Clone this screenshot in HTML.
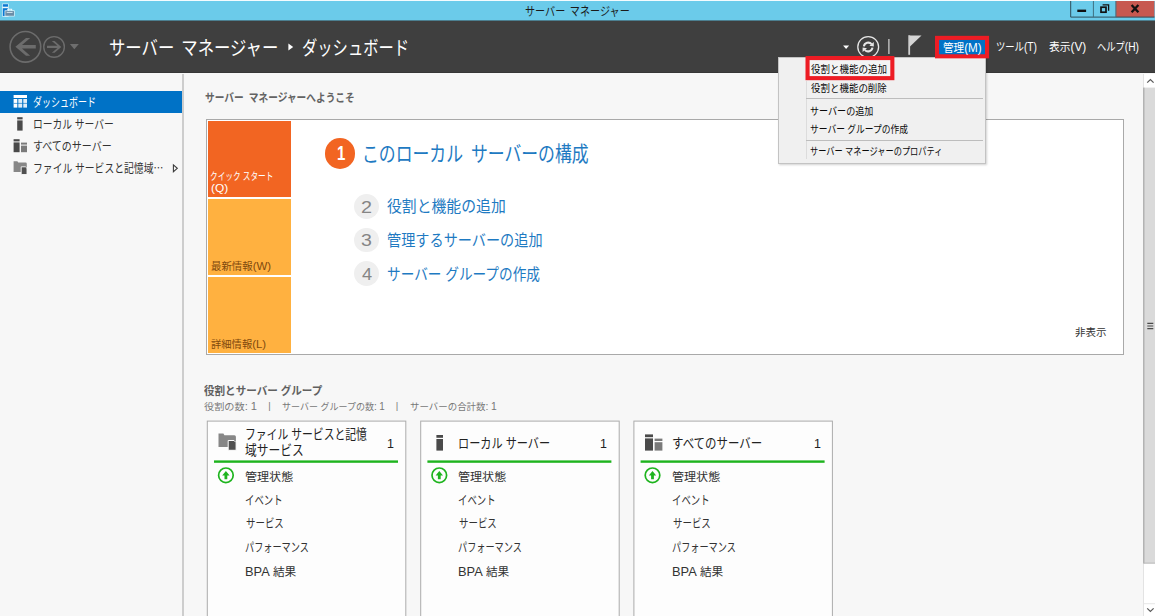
<!DOCTYPE html>
<html lang="ja"><head><meta charset="utf-8"><title>サーバー マネージャー</title>
<style>
html,body{margin:0;padding:0}
body{width:1155px;height:616px;overflow:hidden;position:relative;background:#f7f7f7;font-family:"Liberation Sans", "Noto Sans CJK JP", sans-serif;}
.abs{position:absolute}
.l{font-size:1.1em}
.t{position:absolute;white-space:pre;transform-origin:0 50%;line-height:1;display:block}
#titlebar{position:absolute;left:0;top:0;width:1155px;height:20px;background:#6bcbea;border-top:1px solid #f4fbfe;box-sizing:border-box}
#header{position:absolute;left:0;top:20px;width:1155px;height:53px;background:#3f3f3f;border-top:1px solid #4c7f90;border-bottom:1px solid #373737;box-sizing:border-box}
#sidebar{position:absolute;left:0;top:74px;width:182px;height:542px;background:#f7f7f7;border-right:2px solid #cdcdcd}
#main{position:absolute;left:184px;top:73px;width:959px;height:543px;background:#f7f7f7}
#sel{position:absolute;left:0;top:91px;width:182px;height:21.5px;background:#0072c6}
#welcome{position:absolute;left:206px;top:119px;width:918px;height:236px;background:#fff;border:1px solid #a9a9a9;box-sizing:border-box}
.qt{position:absolute;left:208px;width:82.5px}
.tile{position:absolute;top:421px;width:199px;height:200px;background:#fdfdfd}
.gl{position:absolute;top:460.3px;width:184px;height:2px;background:#1eb41e}
#menu{position:absolute;left:778px;top:57px;width:208px;height:106.5px;background:#f0f0f0;border:1px solid #c3c3c3;box-sizing:border-box;box-shadow:1px 1px 2px rgba(0,0,0,.18)}
.sep{position:absolute;left:806px;width:177px;height:1px;background:#bdbdbd}
.num{position:absolute;border-radius:50%;text-align:center}
#scroll{position:absolute;left:1142.5px;top:74px;width:12.5px;height:542px;background:#fff;border-left:1px solid #e3e3e3;box-sizing:border-box}
</style></head><body>
<div id="sidebar"></div><div id="main"></div>
<div id="sel"></div>
<div id="welcome"></div>
<div class="qt" style="top:121px;height:76.3px;background:#f26522"></div>
<div class="qt" style="top:199px;height:76.3px;background:#ffb140"></div>
<div class="qt" style="top:277px;height:76px;background:#ffb140"></div>
<div class="abs" style="left:208px;top:197.3px;width:82.5px;height:1.7px;background:#fff"></div>
<div class="abs" style="left:208px;top:275.3px;width:82.5px;height:1.7px;background:#fff"></div>
<div class="num" style="left:324.8px;top:138.2px;width:30.4px;height:30.4px;background:#f26522"></div>
<div class="num" style="left:354px;top:193.9px;width:24.8px;height:24.8px;background:#efefef"></div>
<div class="num" style="left:354px;top:227.6px;width:24.8px;height:24.8px;background:#efefef"></div>
<div class="num" style="left:354px;top:261.4px;width:24.8px;height:24.8px;background:#efefef"></div>
<div class="tile" style="left:206.8px"></div>
<div class="tile" style="left:420.3px"></div>
<div class="tile" style="left:633.8px"></div>
<div id="scroll"></div>
<div id="titlebar"></div><div id="header"></div>
<svg class="abs" style="left:0;top:0" width="1155" height="616" viewBox="0 0 1155 616">
<!-- title icon -->
<g id="ti"><rect x="2.2" y="3.6" width="6.4" height="13" fill="#eef8fc"/><rect x="2.8" y="4.2" width="5.2" height="2.5" fill="#0a78d2"/><rect x="2.8" y="8.2" width="5.2" height="7.8" fill="#0a78d2"/>
<path d="M7.8 10.6V9.2H11.6V10.6" fill="none" stroke="#eef8fc" stroke-width="1.1"/><rect x="4.6" y="10.4" width="10" height="6" fill="#eef8fc"/><rect x="5.3" y="11.1" width="8.7" height="4.7" fill="#6b8ea8"/><path d="M6.4 12.3H12.9L12.3 13.1H7z" fill="#eef8fc"/></g>
<!-- window buttons -->
<g id="wb"><rect x="1070.5" y="1" width="22.7" height="16.2" fill="#6bcbea"/><rect x="1093.2" y="1" width="22.6" height="16.2" fill="#6bcbea"/><rect x="1115.8" y="1" width="38.6" height="16.2" fill="#c75850"/>
<path d="M1070.7 1V17.1H1154.5" fill="none" stroke="#2f4f5c" stroke-width="1"/><path d="M1093.4 1V17.1M1115.9 1V17.1" fill="none" stroke="#3f6f80" stroke-width="1"/>
<rect x="1077.3" y="9.6" width="8.8" height="2.4" fill="#111"/>
<rect x="1101" y="7.2" width="5" height="5" fill="none" stroke="#111" stroke-width="1.7"/><path d="M1102.6 4.8H1108.6V10.8" fill="none" stroke="#111" stroke-width="1.3"/>
<path d="M1131.6 5L1138.4 12.2M1138.4 5L1131.6 12.2" stroke="#111" stroke-width="2.3"/>
</g>
<!-- back / forward -->
<circle cx="25.4" cy="46.8" r="15.3" fill="none" stroke="#6c6c6c" stroke-width="1.6"/>
<path d="M15.4 46.8L26 37.9H30.2L22 45H35.8V48.6H22L30.2 55.7H26z" fill="#6c6c6c"/>
<circle cx="54.05" cy="46.9" r="10.3" fill="none" stroke="#6c6c6c" stroke-width="1.4"/>
<path d="M61.3 46.9L54.6 41H51.8L57.4 45.8H47V48H57.4L51.8 52.8H54.6z" fill="#6c6c6c"/>
<path d="M69.9 43.9H78.8L74.35 49.3z" fill="#6e6e6e"/>
<path d="M288.4 43.6L293.2 47L288.4 50.4z" fill="#fff"/>
<!-- header right -->
<path d="M843.1 45.6H849.1L846.1 49.1z" fill="#fff"/>
<circle cx="868.2" cy="47" r="10.4" fill="none" stroke="#e6e6e6" stroke-width="1.3"/>
<path d="M863.9 46.4A4.4 4.4 0 0 1 871.6 44.2M872.5 47.6A4.4 4.4 0 0 1 864.8 49.8" fill="none" stroke="#e6e6e6" stroke-width="2"/>
<path d="M869.4 45.8L873.8 42L873.8 46.4z M867 48.2L862.6 52L862.6 47.6z" fill="#e6e6e6"/>
<rect x="888.3" y="39" width="1.2" height="15" fill="#d8d8d8"/>
<rect x="908.3" y="35.2" width="1.8" height="19.6" fill="#cfcfcf"/><path d="M910 35.4H921.5L910 46.6z" fill="#d6d6d6"/>
<!-- sidebar icons -->
<g fill="#fff"><rect x="13.6" y="95" width="13.4" height="3"/><rect x="13.6" y="99" width="3.7" height="8.6"/><rect x="18.3" y="99" width="3.9" height="8.6" opacity=".88"/><rect x="23.3" y="99" width="3.7" height="8.6" opacity=".88"/><rect x="13.6" y="102.9" width="13.4" height=".9" fill="#0072c6" opacity=".7"/></g>
<g fill="#4a4a4a"><rect x="17.2" y="117.2" width="5.4" height="2.2"/><rect x="17.2" y="120.4" width="5.4" height="10.2"/></g>
<g fill="#4a4a4a"><rect x="13.6" y="139.2" width="6" height="2.2"/><rect x="13.6" y="142.4" width="6" height="9.8"/><rect x="21" y="142.6" width="6" height="2" fill="#7a7a7a"/><rect x="21" y="145.6" width="6" height="6.6" fill="#7a7a7a"/></g>
<g><path d="M13.6 161.3H17.4L18.2 162.6H25.6Q26.8 162.6 26.8 163.8V171.9H13.6z" fill="#878787"/><path d="M21.2 166.8H25.4L27 168.4V174.5H21.2z" fill="#505050" stroke="#f7f7f7" stroke-width=".9"/></g>
<path d="M173.4 164.9L177.3 168.3L173.4 171.7z" fill="none" stroke="#3c3c3c" stroke-width="1.1"/>
<!-- scrollbar -->
<rect x="1143.5" y="87.6" width="11.5" height="475.8" fill="#dadada"/><rect x="1143.2" y="87.6" width="1.2" height="475.8" fill="#a8a8a8"/><rect x="1143.5" y="562.6" width="11.5" height="1" fill="#b8b8b8"/>
<path d="M1147.2 82.6L1150.4 79.6L1153.6 82.6" fill="none" stroke="#5a5a5a" stroke-width="1.3"/>
<path d="M1147.2 608.4L1150.4 611.4L1153.6 608.4" fill="none" stroke="#5a5a5a" stroke-width="1.3"/>
<rect x="1143.5" y="603.2" width="11.5" height="1" fill="#e6e6e6"/>
<path d="M1147.3 323.4H1153.3M1147.3 326H1153.3M1147.3 328.6H1153.3" stroke="#4a4a4a" stroke-width="1.1"/>
<!-- tile icons -->
<g id="tic0"><path d="M218.5 433.6H223.4L224.4 435.2H234.4Q235.9 435.2 235.9 436.8V446.9H218.5z" fill="#878787"/><path d="M228.2 440.5H234L236.1 442.6V450.3H228.2z" fill="#505050" stroke="#fdfdfd" stroke-width="1"/></g>
<g id="tic1" fill="#4a4a4a"><rect x="436.4" y="435" width="6.6" height="2.8"/><rect x="436.4" y="439" width="6.6" height="11.6"/></g>
<g id="tic2"><rect x="645" y="434.4" width="8" height="2.8" fill="#4a4a4a"/><rect x="645" y="438.4" width="8" height="12.2" fill="#4a4a4a"/><rect x="654.6" y="438.6" width="7.8" height="2.4" fill="#7a7a7a"/><rect x="654.6" y="442.2" width="7.8" height="8.4" fill="#7a7a7a"/></g>
<!-- green status -->
<rect x="207.3" y="421.1" width="198.5" height="205" fill="none" stroke="#ababab" stroke-width="1"/>
<rect x="214.0" y="460.4" width="184" height="2.4" fill="#1eb41e"/>
<circle cx="225.9" cy="475.3" r="7.3" fill="none" stroke="#1eb41e" stroke-width="1.7"/><path d="M225.9 470.9L229.6 475.4H227.3V479.2H224.5V475.4H222.2z" fill="#1eb41e"/>
<rect x="420.7" y="421.1" width="198.5" height="205" fill="none" stroke="#ababab" stroke-width="1"/>
<rect x="427.4" y="460.4" width="184" height="2.4" fill="#1eb41e"/>
<circle cx="439.3" cy="475.3" r="7.3" fill="none" stroke="#1eb41e" stroke-width="1.7"/><path d="M439.3 470.9L443.0 475.4H440.7V479.2H437.9V475.4H435.6z" fill="#1eb41e"/>
<rect x="633.9" y="421.1" width="198.5" height="205" fill="none" stroke="#ababab" stroke-width="1"/>
<rect x="640.6" y="460.4" width="184" height="2.4" fill="#1eb41e"/>
<circle cx="652.5" cy="475.3" r="7.3" fill="none" stroke="#1eb41e" stroke-width="1.7"/><path d="M652.5 470.9L656.2 475.4H653.9V479.2H651.1V475.4H648.8z" fill="#1eb41e"/>
</svg>

<div id="menu"></div>
<div class="abs" style="left:806px;top:81px;width:1px;height:78px;background:#dcdcdc"></div>
<div class="sep" style="top:98px"></div><div class="sep" style="top:140px"></div>
<svg class="abs" style="left:0;top:0" width="1155" height="616" viewBox="0 0 1155 616">
<rect x="937.05" y="37.9" width="50" height="18.4" fill="#0072c6" stroke="#ed1c24" stroke-width="4.1"/>
<rect x="807.55" y="58.05" width="84.8" height="20.1" fill="#f4f4f4" stroke="#ed1c24" stroke-width="4.1"/>
</svg>

<span class="t" id="ttl" style="left:525.39px;top:3.15px;font-size:12px;line-height:18.0px;color:#1b1b1b;transform:scaleX(0.8421);word-spacing:2px;">サーバー マネージャー</span>
<span class="t" id="crumb" style="left:109.00px;top:34.17px;font-size:19.5px;line-height:29.25px;color:#ffffff;transform:scaleX(0.8388);word-spacing:3px;">サーバー マネージャー</span>
<span class="t" id="crumb2" style="left:302.12px;top:33.87px;font-size:19.5px;line-height:29.25px;color:#ffffff;transform:scaleX(0.7848);">ダッシュボード</span>
<span class="t" id="m1" style="left:943.39px;top:39.53px;font-size:11.5px;line-height:17.25px;color:#ffffff;transform:scaleX(0.9226);">管理<span class="l">(M)</span></span>
<span class="t" id="m2" style="left:996.05px;top:39.14px;font-size:11.5px;line-height:17.25px;color:#ffffff;transform:scaleX(0.8092);">ツール<span class="l">(T)</span></span>
<span class="t" id="m3" style="left:1049.43px;top:39.15px;font-size:11.5px;line-height:17.25px;color:#ffffff;transform:scaleX(0.9341);">表示<span class="l">(V)</span></span>
<span class="t" id="m4" style="left:1097.35px;top:39.13px;font-size:11.5px;line-height:17.25px;color:#ffffff;transform:scaleX(0.8067);">ヘルプ<span class="l">(H)</span></span>
<span class="t" id="d1" style="left:810.78px;top:61.90px;font-size:10.5px;line-height:15.75px;color:#0a0a0a;transform:scaleX(0.9054);">役割と機能の追加</span>
<span class="t" id="d2" style="left:810.78px;top:80.90px;font-size:10.5px;line-height:15.75px;color:#0a0a0a;transform:scaleX(0.9027);">役割と機能の削除</span>
<span class="t" id="d3" style="left:810.05px;top:103.67px;font-size:10.5px;line-height:15.75px;color:#0a0a0a;transform:scaleX(0.8627);">サーバーの追加</span>
<span class="t" id="d4" style="left:810.07px;top:121.71px;font-size:10.5px;line-height:15.75px;color:#0a0a0a;transform:scaleX(0.8335);">サーバー グループの作成</span>
<span class="t" id="d5" style="left:810.16px;top:144.21px;font-size:10.5px;line-height:15.75px;color:#0a0a0a;transform:scaleX(0.7817);">サーバー マネージャーのプロパティ</span>
<span class="t" id="s1" style="left:33.19px;top:94.16px;font-size:12px;line-height:18.0px;color:#ffffff;transform:scaleX(0.7491);">ダッシュボード</span>
<span class="t" id="s2" style="left:32.83px;top:115.90px;font-size:12px;line-height:18.0px;color:#333333;transform:scaleX(0.8150);">ローカル サーバー</span>
<span class="t" id="s3" style="left:33.36px;top:138.39px;font-size:12px;line-height:18.0px;color:#333333;transform:scaleX(0.8317);">すべてのサーバー</span>
<span class="t" id="s4" style="left:32.83px;top:159.37px;font-size:12px;line-height:18.0px;color:#333333;transform:scaleX(0.8178);">ファイル サービスと記憶域<span style="font-family:'Noto Sans CJK JP',sans-serif">…</span></span>
<span class="t" id="w0" style="left:204.99px;top:89.79px;font-size:11.5px;line-height:17.25px;color:#636363;font-weight:700;transform:scaleX(0.8423);word-spacing:3px;">サーバー マネージャーへようこそ</span>
<span class="t" id="q1" style="left:210.08px;top:169.22px;font-size:10.5px;line-height:15.75px;color:#ffffff;transform:scaleX(0.7287);">クイック スタート</span>
<span class="t" id="q2" style="left:210.85px;top:181.34px;font-size:10px;line-height:15.0px;color:#ffffff;transform:scaleX(1.1899);">(Q)</span>
<span class="t" id="q3" style="left:210.57px;top:258.91px;font-size:10.5px;line-height:15.75px;color:#7f4a0e;transform:scaleX(0.9911);">最新情報<span class="l">(W)</span></span>
<span class="t" id="q4" style="left:210.59px;top:336.95px;font-size:10.5px;line-height:15.75px;color:#7f4a0e;transform:scaleX(0.9821);">詳細情報<span class="l">(L)</span></span>
<span class="t" id="c1" style="left:362.00px;top:137.86px;font-size:21px;line-height:31.5px;color:#1e7ac2;transform:scaleX(0.8017);word-spacing:4px;">このローカル サーバーの構成</span>
<span class="t" id="c2" style="left:387.49px;top:194.94px;font-size:15.5px;line-height:23.25px;color:#1e7ac2;transform:scaleX(0.9575);">役割と機能の追加</span>
<span class="t" id="c3" style="left:387.00px;top:228.88px;font-size:15.5px;line-height:23.25px;color:#1e7ac2;transform:scaleX(0.9134);">管理するサーバーの追加</span>
<span class="t" id="c4" style="left:387.00px;top:263.06px;font-size:15.5px;line-height:23.25px;color:#1e7ac2;transform:scaleX(0.8803);">サーバー グループの作成</span>
<span class="t" id="g1" style="left:336.60px;top:138.40px;font-size:20px;line-height:30.0px;color:#ffffff;font-weight:700;transform:scaleX(0.7500);">1</span>
<span class="t" id="g2" style="left:361.40px;top:196.20px;font-size:16px;line-height:24.0px;color:#858585;transform:scaleX(1.2344);">2</span>
<span class="t" id="g3" style="left:361.40px;top:229.00px;font-size:16px;line-height:24.0px;color:#858585;transform:scaleX(1.2206);">3</span>
<span class="t" id="g4" style="left:361.61px;top:263.20px;font-size:16px;line-height:24.0px;color:#858585;transform:scaleX(1.1376);">4</span>
<span class="t" id="hide" style="left:1075.42px;top:324.54px;font-size:10.5px;line-height:15.75px;color:#333333;transform:scaleX(1.0003);">非表示</span>
<span class="t" id="r0" style="left:204.41px;top:383.45px;font-size:11px;line-height:16.5px;color:#606060;font-weight:700;transform:scaleX(0.9596);">役割とサーバー グループ</span>
<span class="t" id="r1" style="left:204.28px;top:400.17px;font-size:9.5px;line-height:14.25px;color:#777777;transform:scaleX(1.0706);">役割の数<span class="l">:</span> <span class="l">1</span></span>
<span class="t" id="r2" style="left:268.21px;top:399.17px;font-size:9.5px;line-height:14.25px;color:#777777;">|</span>
<span class="t" id="r3" style="left:282.47px;top:400.19px;font-size:9.5px;line-height:14.25px;color:#777777;transform:scaleX(0.9476);">サーバー グループの数<span class="l">:</span> <span class="l">1</span></span>
<span class="t" id="r4" style="left:395.67px;top:399.17px;font-size:9.5px;line-height:14.25px;color:#777777;">|</span>
<span class="t" id="r5" style="left:409.60px;top:400.14px;font-size:9.5px;line-height:14.25px;color:#777777;transform:scaleX(0.9941);">サーバーの合計数<span class="l">:</span> <span class="l">1</span></span>
<span class="t" id="h0a" style="left:244.74px;top:425.49px;font-size:13.5px;line-height:20.25px;color:#222222;transform:scaleX(0.8008);">ファイル サービスと記憶</span>
<span class="t" id="h0b" style="left:244.97px;top:440.79px;font-size:13.5px;line-height:20.25px;color:#222222;transform:scaleX(0.8692);">域サービス</span>
<span class="t" id="n0" style="left:387.31px;top:433.76px;font-size:13.5px;line-height:20.25px;color:#222222;transform:scaleX(0.9208);">1</span>
<span class="t" id="k0_0" style="left:244.96px;top:468.85px;font-size:11.5px;line-height:17.25px;color:#333333;transform:scaleX(1.0479);">管理状態</span>
<span class="t" id="k0_1" style="left:245.40px;top:491.87px;font-size:12.5px;line-height:18.75px;color:#333333;transform:scaleX(0.7506);">イベント</span>
<span class="t" id="k0_2" style="left:245.74px;top:515.30px;font-size:12.5px;line-height:18.75px;color:#333333;transform:scaleX(0.7556);">サービス</span>
<span class="t" id="k0_3" style="left:245.34px;top:538.76px;font-size:12.5px;line-height:18.75px;color:#333333;transform:scaleX(0.7316);">パフォーマンス</span>
<span class="t" id="k0_4" style="left:245.40px;top:564.13px;font-size:11.5px;line-height:17.25px;color:#333333;transform:scaleX(1.0145);"><span class="l">BPA</span> 結果</span>
<span class="t" id="h1" style="left:458.14px;top:434.09px;font-size:13.5px;line-height:20.25px;color:#222222;transform:scaleX(0.8252);">ローカル サーバー</span>
<span class="t" id="n1" style="left:600.31px;top:433.76px;font-size:13.5px;line-height:20.25px;color:#222222;transform:scaleX(0.9208);">1</span>
<span class="t" id="k1_0" style="left:457.96px;top:468.85px;font-size:11.5px;line-height:17.25px;color:#333333;transform:scaleX(1.0479);">管理状態</span>
<span class="t" id="k1_1" style="left:458.40px;top:491.87px;font-size:12.5px;line-height:18.75px;color:#333333;transform:scaleX(0.7506);">イベント</span>
<span class="t" id="k1_2" style="left:458.74px;top:515.30px;font-size:12.5px;line-height:18.75px;color:#333333;transform:scaleX(0.7556);">サービス</span>
<span class="t" id="k1_3" style="left:458.34px;top:538.76px;font-size:12.5px;line-height:18.75px;color:#333333;transform:scaleX(0.7316);">パフォーマンス</span>
<span class="t" id="k1_4" style="left:458.40px;top:564.13px;font-size:11.5px;line-height:17.25px;color:#333333;transform:scaleX(1.0145);"><span class="l">BPA</span> 結果</span>
<span class="t" id="h2" style="left:671.67px;top:434.13px;font-size:13.5px;line-height:20.25px;color:#222222;transform:scaleX(0.8468);">すべてのサーバー</span>
<span class="t" id="n2" style="left:814.31px;top:433.76px;font-size:13.5px;line-height:20.25px;color:#222222;transform:scaleX(0.9208);">1</span>
<span class="t" id="k2_0" style="left:671.96px;top:468.85px;font-size:11.5px;line-height:17.25px;color:#333333;transform:scaleX(1.0479);">管理状態</span>
<span class="t" id="k2_1" style="left:672.40px;top:491.87px;font-size:12.5px;line-height:18.75px;color:#333333;transform:scaleX(0.7506);">イベント</span>
<span class="t" id="k2_2" style="left:672.74px;top:515.30px;font-size:12.5px;line-height:18.75px;color:#333333;transform:scaleX(0.7556);">サービス</span>
<span class="t" id="k2_3" style="left:672.34px;top:538.76px;font-size:12.5px;line-height:18.75px;color:#333333;transform:scaleX(0.7316);">パフォーマンス</span>
<span class="t" id="k2_4" style="left:672.40px;top:564.13px;font-size:11.5px;line-height:17.25px;color:#333333;transform:scaleX(1.0145);"><span class="l">BPA</span> 結果</span>
</body></html>
